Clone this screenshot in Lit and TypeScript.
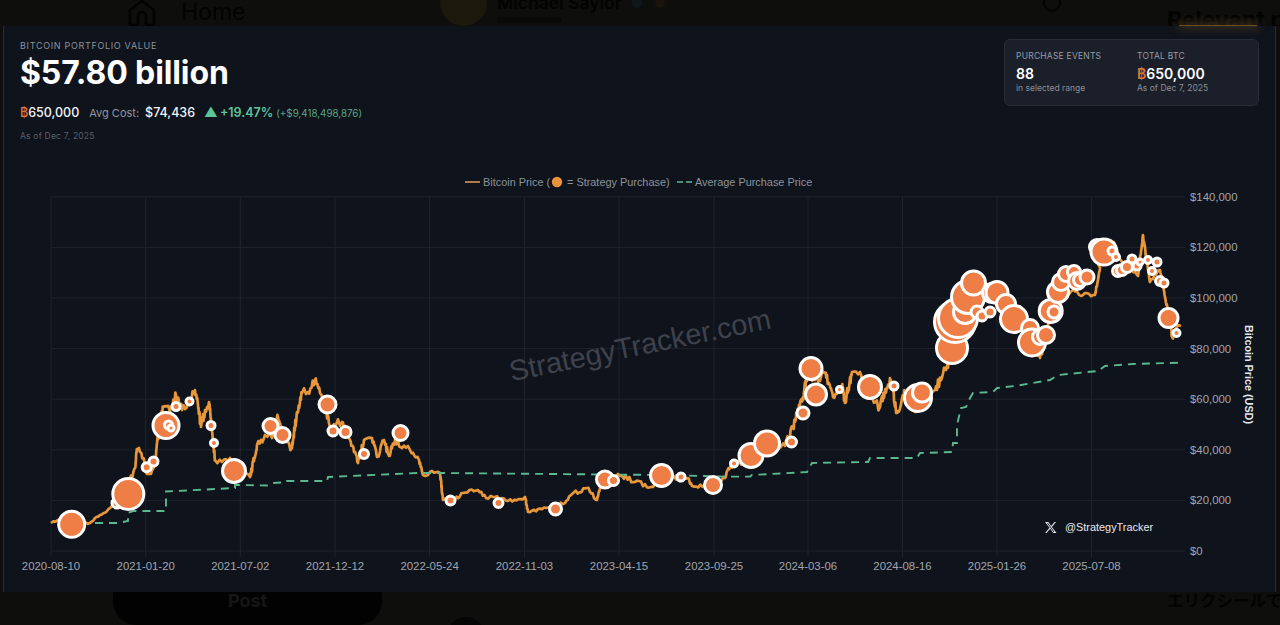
import { LitElement, html, css, svg } from 'lit';
import { customElement } from 'lit/decorators.js';

type Pt = [number, number];

// value axis: $0 sits at y=551, each 20k step is 50.6px
const GRID_X = [51, 145.7, 240.3, 335, 429.6, 524.5, 619, 714, 808, 902.5, 997, 1091.5];
const DATES = ['2020-08-10', '2021-01-20', '2021-07-02', '2021-12-12', '2022-05-24', '2022-11-03', '2023-04-15', '2023-09-25', '2024-03-06', '2024-08-16', '2025-01-26', '2025-07-08'];
const TICKS = [0, 20, 40, 60, 80, 100, 120, 140];
const tickY = (k: number) => 551 - (k / 20) * 50.6;

const PRICE: Pt[] = [
  [51, 523], [60, 520], [72, 522], [90, 523], [100, 515], [110, 508], [125, 490], [130, 480], [135, 468], [137, 450], [139, 448],
  [143, 458], [147, 474], [151, 474], [155, 466], [157, 443], [160, 425], [163, 407], [170, 412], [176, 395], [182, 410], [190, 402], [195, 390],
  [198, 405], [201, 427], [205, 410], [209, 402], [212, 432], [215, 460], [222, 462], [230, 458], [235, 478], [243, 470], [250, 477],
  [257, 445], [265, 435], [272, 438], [278, 417], [284, 440], [292, 448], [297, 412], [302, 393], [308, 392], [315, 380], [320, 393],
  [326, 412], [330, 427], [336, 425], [342, 422], [350, 440], [358, 463], [364, 440], [372, 438], [377, 457], [384, 440], [389, 456],
  [395, 440], [402, 448], [410, 450], [419, 460], [423, 475], [430, 472], [440, 473], [443, 500], [455, 500], [463, 493], [478, 490],
  [486, 498], [493, 497], [508, 501], [525, 497], [528, 512], [550, 507], [565, 503], [572, 494], [587, 488], [597, 500], [600, 488],
  [612, 476], [622, 476], [635, 482], [653, 487], [668, 479], [688, 478], [692, 486], [713, 487], [725, 478], [730, 467], [745, 460],
  [765, 448], [785, 446], [793, 427], [803, 397], [808, 372], [815, 380], [825, 373], [833, 397], [842, 385], [845, 403], [852, 372],
  [860, 372], [866, 395], [880, 407], [890, 378], [897, 413], [905, 392], [915, 412], [925, 395], [935, 390], [947, 367], [952, 345],
  [973, 285], [985, 300], [1000, 295], [1015, 320], [1030, 345], [1040, 358], [1048, 325], [1065, 295], [1073, 290], [1083, 295], [1095, 295],
  [1100, 268], [1096, 255], [1105, 242], [1113, 242], [1122, 262], [1130, 268], [1138, 276], [1143, 235], [1148, 270], [1150, 282],
  [1160, 270], [1165, 297], [1170, 320], [1172, 337], [1178, 325], [1181, 326],
];

const AVG: Pt[] = [
  [95, 523], [118, 523], [128, 521], [128, 513], [133, 511], [166, 511], [166, 491.5], [235, 488], [235, 485], [268, 485.5], [272, 483],
  [282, 482.5], [283, 481], [327, 481], [328, 477], [418, 473], [440, 473], [663, 475], [725, 476.6], [750, 476.6], [752, 475], [807, 472],
  [812, 463], [868, 462], [870, 458], [917, 458], [920, 453], [952, 452], [953, 443], [957, 443], [957, 425], [961, 408], [966, 407],
  [970, 398], [973, 393], [993, 392], [997, 388], [1015, 386], [1050, 380], [1058, 375], [1098, 371], [1105, 366], [1133, 364], [1180, 362.7],
];

// cx, cy, outer radius; drawn in this order so overlaps stack the same way
const BUYS: [number, number, number][] = [
  [117, 503, 6.5], [128.3, 494, 17], [71.7, 524.3, 14.5], [146.7, 467.3, 6], [153.5, 461.5, 6], [166, 425.5, 14.5], [168.5, 425, 5.5], [171, 428, 4.5],
  [176, 406.5, 5.5], [189.5, 401.5, 5], [211, 425.5, 5.5], [214, 443, 5], [234, 471, 13], [270.5, 426, 9], [282.5, 435, 9],
  [327.5, 404.5, 10], [333, 431, 6.5], [345.5, 432, 7], [364, 454, 6], [400.5, 433, 9], [450.5, 500.5, 6], [498.5, 503, 6],
  [555.5, 509, 7.5], [605, 479.5, 10], [613.5, 480.5, 6.5], [661.5, 475.5, 12.5], [681, 477, 5.5], [713, 485, 10], [734, 463.5, 5],
  [751, 455.5, 13.5], [767, 443.5, 14], [791.5, 442, 6.5], [803, 413, 7.5], [811, 368.5, 12.5], [816, 394.5, 12], [839.5, 389.5, 4.5],
  [870, 387, 13], [894, 386, 5.5], [918, 398, 15], [922, 392.5, 11],
  [952, 348, 17], [955, 322, 22], [958, 318, 21], [965, 312, 13], [968, 297, 18], [973.5, 283, 13.5], [977, 312, 7.5], [982, 316, 6.5], [990, 312, 6.5],
  [992, 293, 11], [997, 292.5, 12.5], [1006, 304, 11], [1014, 319, 15], [1030, 328, 10], [1032, 342.5, 15], [1040, 337, 9], [1046, 335, 10],
  [1050.7, 311, 13], [1054, 312, 7.5], [1058, 292, 12], [1061, 282, 10], [1066, 274, 9], [1074, 272, 8], [1077, 281, 10], [1080, 280, 8], [1087, 277, 8.5],
  [1097, 247, 9], [1104, 252, 14.5], [1112, 251, 5.5], [1116, 257, 5], [1118, 271, 7], [1122, 270, 7], [1127, 267, 7], [1132, 259, 5.5], [1137, 266, 5.5],
  [1140, 262, 4.5], [1148, 260, 5], [1157, 262, 5.5], [1152, 271, 5], [1160, 281, 6], [1164, 283, 5.5], [1168.5, 318, 11], [1176.5, 333, 5],
];

// fixed seed so the price line has the same wiggle on every load; wiggle grows with the price, up to a cap
function roughen(points: Pt[]) {
  let seed = 9173;
  const next = () => {
    seed = (seed * 16807) % 2147483647;
    return seed / 2147483647 - 0.5;
  };
  const out: string[] = [];
  points.forEach(([x, y], i) => {
    const prev = points[i - 1];
    if (prev) {
      const steps = Math.floor(Math.hypot(x - prev[0], y - prev[1]) / 2);
      for (let s = 1; s < steps; s++) {
        const t = s / steps;
        const py = prev[1] + (y - prev[1]) * t;
        const amp = py < 330 ? 4 : Math.min((551 - py) * 0.075, 10);
        out.push(`${(prev[0] + (x - prev[0]) * t).toFixed(1)},${(py + next() * amp).toFixed(1)}`);
      }
    }
    out.push(`${x},${y}`);
  });
  return out.join(' ');
}

@customElement('price-chart')
export class PriceChart extends LitElement {
  static styles = css`
    :host { display: block; }
    svg { display: block; }
    text { font-family: "Liberation Sans", Arial, sans-serif; }
    .grid { stroke: #1f232d; stroke-width: 1; }
    .axis { fill: #a1a5ad; font-size: 11.4px; }
    .axis-title { fill: #e4e6ea; font-size: 10.8px; font-weight: 700; }
    .legend { fill: #8d929b; font-size: 10.9px; }
    .mark { fill: #3e424c; font-size: 29px; }
    .handle { fill: #e8e9ec; font-size: 10.9px; }
    .price { fill: none; stroke: #e8973a; stroke-width: 2.7; stroke-linejoin: round; }
    .avg { fill: none; stroke: #5bb890; stroke-width: 1.9; stroke-dasharray: 8 6; }
    .buy { fill: #ef7d46; stroke: #fff; stroke-width: 3; }
  `;

  render() {
    return html`
      <svg width="1271" height="566" viewBox="4 26 1271 566">
        ${TICKS.map((k) => svg`
          <line class="grid" x1="51" x2="1185" y1=${tickY(k)} y2=${tickY(k)}></line>
          <text class="axis" x="1190" y=${tickY(k) + 4}>$${k === 0 ? '0' : `${k},000`}</text>
        `)}
        ${GRID_X.map((x, i) => svg`
          <line class="grid" x1=${x} x2=${x} y1="197" y2="557"></line>
          <text class="axis" x=${x} y="570" text-anchor="middle">${DATES[i]}</text>
        `)}

        <text class="mark" x="640" y="355" text-anchor="middle" transform="rotate(-11.5 640 345)">StrategyTracker.com</text>

        <line x1="465" x2="480" y1="182" y2="182" stroke="#e8a05a" stroke-width="1.5"></line>
        <text class="legend" x="483" y="186">Bitcoin Price (</text>
        <circle cx="557" cy="182" r="5.2" fill="#e8923a"></circle>
        <text class="legend" x="567" y="186">= Strategy Purchase)</text>
        <line x1="677" x2="692" y1="182" y2="182" stroke="#5bb890" stroke-width="1.5" stroke-dasharray="6 3"></line>
        <text class="legend" x="695" y="186">Average Purchase Price</text>

        <polyline class="price" points=${roughen(PRICE)}></polyline>
        <polyline class="avg" points=${AVG.map((p) => p.join(',')).join(' ')}></polyline>
        ${BUYS.map(([x, y, r]) => svg`<circle class="buy" cx=${x} cy=${y} r=${r - 1.5}></circle>`)}

        <path d="M1045 522h3.4l2.8 4 3.4-4h1.4l-4.1 4.900 4.600 6.100h-3.200l-3.100-4.300-3.700 4.300h-1.400l4.400-5.200zM1047 523l6.500 9h1l-6.500-9z" fill="#e8e9ec" fill-rule="evenodd"></path>
        <text class="handle" x="1065" y="531">@StrategyTracker</text>

        <text class="axis-title" transform="translate(1245 325) rotate(90)">Bitcoin Price (USD)</text>
      </svg>
    `;
  }
}

@customElement('app-root')
export class AppRoot extends LitElement {
  static styles = css`
    :host {
      display: block;
      height: 625px;
      overflow: hidden;
      background: #0e0e0c;
      font-family: Inter, "Liberation Sans", sans-serif;
    }
    .strip {
      height: 26px;
      display: flex;
      align-items: flex-start;
      overflow: hidden;
      color: #030303;
      background: #0e0e0c;
      white-space: nowrap;
    }
    .strip.bottom { height: 33px; }
    .home-icon { margin-left: 128px; flex: none; }
    .home { margin-left: 25px; margin-top: -1px; font-size: 23px; line-height: 26px; width: 259px; flex: none; }
    .avatar { width: 47px; height: 47px; margin-top: -21px; border-radius: 50%; background: #1b190b; flex: none; }
    .author-box { margin-left: 10px; width: 546px; flex: none; }
    .author { margin-top: -7px; font-size: 17.5px; line-height: 20px; font-weight: 600; display: flex; align-items: center; gap: 10px; }
    .badge { width: 10px; height: 10px; border-radius: 50%; background: #0f171d; }
    .badge.warm { margin-left: 3px; background: #1c130a; }
    /* the line under the name is unreadable in the source, so only its shape is kept */
    .smudge { margin-top: 4px; width: 64px; height: 6px; border-radius: 3px; background: #090908; }
    .ring { width: 14px; height: 14px; margin-top: -6px; border: 2px solid #030303; border-radius: 50%; flex: none; }
    .relevant { margin-left: 106px; margin-top: 7px; font-size: 23px; line-height: 26px; font-weight: 700; color: #030303; flex: none; }
    .post {
      margin-left: 113px;
      width: 269px;
      height: 33px;
      flex: none;
      border-radius: 0 0 24px 24px;
      background: #020202;
      color: #161616;
      font-size: 18px;
      font-weight: 700;
      text-align: center;
      line-height: 18px;
    }
    .reply-avatar { margin-left: 65px; margin-top: 25px; width: 38px; height: 38px; border-radius: 50%; background: #050505; flex: none; }
    .jp { margin-left: 682px; font-family: "Noto Sans CJK JP", sans-serif; font-size: 16.5px; line-height: 17px; font-weight: 700; color: #030303; flex: none; }
    .panel {
      height: 566px;
      margin: 0 4px 0 3px;
      position: relative;
      background: #0f131c;
      border-left: 1px solid #2a2c31;
      border-right: 1px solid #2a2c31;
      box-sizing: border-box;
    }
    .glow {
      position: absolute;
      top: -1px;
      right: 18px;
      width: 78px;
      height: 1px;
      background: #6e4d22;
      box-shadow: 0 0 8px 2px #4a3a20;
    }
    .head {
      position: absolute;
      inset: 0 0 auto 0;
      display: flex;
      justify-content: space-between;
      align-items: flex-start;
      padding: 14px 16px 0 16px;
    }
    .eyebrow { font-size: 9px; line-height: 11px; letter-spacing: 0.68px; color: #8d929b; }
    .total { margin-top: 4px; font-size: 32px; line-height: 36px; font-weight: 700; color: #fff; letter-spacing: -0.1px; }
    .stats { margin-top: 13px; display: flex; align-items: baseline; font-size: 12.5px; line-height: 16px; font-weight: 500; color: #f3f4f6; }
    .btc { color: #d8793c; }
    .avg-label { margin-left: 10px; margin-right: 6px; font-size: 11px; font-weight: 400; color: #9196a0; }
    .tri { margin-left: 9px; margin-right: 2px; font-size: 13.5px; color: #5fc598; }
    .up { font-weight: 600; color: #5fc598; }
    .up-note { margin-left: 3px; font-size: 9.8px; font-weight: 400; color: #58a583; }
    .as-of { margin-top: 9px; font-size: 8.5px; line-height: 11px; color: #5a5f69; letter-spacing: 0.2px; }
    .card {
      width: 255px;
      height: 67px;
      margin-top: -1px;
      box-sizing: border-box;
      padding: 11px 11px;
      display: grid;
      grid-template-columns: 121px 1fr;
      background: #1a1f2a;
      border: 1px solid #272c37;
      border-radius: 6px;
    }
    .card-label { font-size: 8.5px; line-height: 11px; letter-spacing: 0.22px; color: #989ca5; }
    .card-value { margin-top: 3px; font-size: 14px; line-height: 17px; font-weight: 600; color: #fff; }
    .card-note { margin-top: 1px; font-size: 8.5px; line-height: 11px; color: #8a8e97; }
  `;

  render() {
    return html`
      <div class="strip">
        <svg class="home-icon" width="28" height="26" viewBox="0 0 28 26" fill="none" stroke="#030303" stroke-width="2.5">
          <path d="M2 25V10L14 1l12 9v15h-8v-9a4 4 0 0 0-8 0v9z"></path>
        </svg>
        <div class="home">Home</div>
        <div class="avatar"></div>
        <div class="author-box">
          <div class="author">Michael Saylor <span class="badge"></span><span class="badge warm"></span></div>
          <div class="smudge"></div>
        </div>
        <div class="ring"></div>
        <div class="relevant">Relevant people</div>
      </div>
      <div class="panel">
        <div class="glow"></div>
        <price-chart></price-chart>
        <div class="head">
          <div>
            <div class="eyebrow">BITCOIN PORTFOLIO VALUE</div>
            <div class="total">$57.80 billion</div>
            <div class="stats">
              <span class="btc">฿</span>650,000
              <span class="avg-label">Avg Cost:</span>$74,436
              <span class="tri">▲</span>
              <span class="up">+19.47%</span>
              <span class="up-note">(+$9,418,498,876)</span>
            </div>
            <div class="as-of">As of Dec 7, 2025</div>
          </div>
          <div class="card">
            <div>
              <div class="card-label">PURCHASE EVENTS</div>
              <div class="card-value">88</div>
              <div class="card-note">in selected range</div>
            </div>
            <div>
              <div class="card-label">TOTAL BTC</div>
              <div class="card-value"><span class="btc">฿</span>650,000</div>
              <div class="card-note">As of Dec 7, 2025</div>
            </div>
          </div>
        </div>
      </div>
      <div class="strip bottom">
        <div class="post">Post</div>
        <div class="reply-avatar"></div>
        <div class="jp">エリクシールで</div>
      </div>
    `;
  }
}
